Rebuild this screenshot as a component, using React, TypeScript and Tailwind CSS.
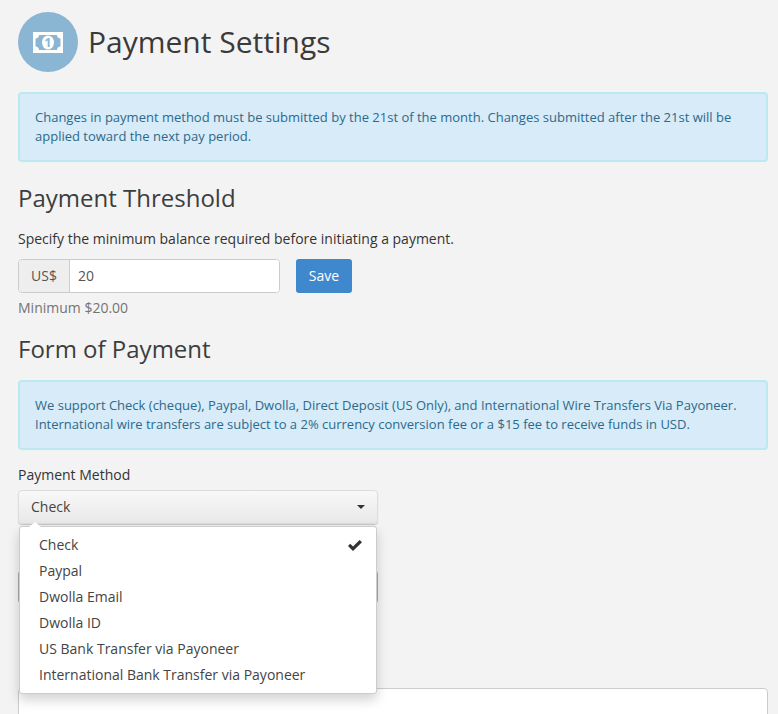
import { useState } from 'react';

const methods = [
  'Check',
  'Paypal',
  'Dwolla Email',
  'Dwolla ID',
  'US Bank Transfer via Payoneer',
  'International Bank Transfer via Payoneer',
];

function BillIcon() {
  return (
    <svg width="30" height="21" viewBox="0 0 30 21" className="block">
      <path
        fill="#fff"
        fillRule="evenodd"
        d="M0 0h30v21H0z M6 3 C6 5 4.5 6.5 2.5 6.5 v8 C4.5 14.5 6 16 6 18 h18 C24 16 25.5 14.5 27.5 14.5 v-8 C25.5 6.5 24 5 24 3z"
      />
      <ellipse cx="15" cy="10.5" rx="6" ry="7" fill="#fff" />
      <text x="15" y="15" textAnchor="middle" fontSize="12" fontWeight="700" fill="#8ab6d3" fontFamily="'Open Sans', sans-serif">1</text>
    </svg>
  );
}

function Alert({ children }: { children: React.ReactNode }) {
  return (
    <div className="rounded-[4px] border-2 border-[#bce8f1] bg-[#d8ebf8] px-[15px] py-[14px] text-[13px] leading-[19px] text-[#2b6a8c]">
      {children}
    </div>
  );
}

export default function App() {
  const [selected] = useState('Check');

  return (
    <div className="h-[714px] overflow-hidden bg-[#f3f3f3] pl-[18px] pr-[10px] pt-[12px] font-['Open_Sans',sans-serif] text-[14px] leading-[20px] text-[#333]">
      <div className="flex items-center gap-[10px]">
        <div className="flex h-[60px] w-[60px] items-center justify-center rounded-full bg-[#8ab6d3]">
          <BillIcon />
        </div>
        <h1 className="text-[30px] leading-[36px] font-normal text-[#3a3a3a]">Payment Settings</h1>
      </div>

      <div className="mt-[20px]">
        <Alert>
          Changes in payment method must be submitted by the 21st of the month. Changes submitted after the 21st will be applied toward the next pay period.
        </Alert>
      </div>

      <h2 className="mt-[20px] text-[24px] leading-[32px] font-normal text-[#3d3d3d]">Payment Threshold</h2>
      <p className="mt-[15px]">Specify the minimum balance required before initiating a payment.</p>

      <div className="mt-[10px] flex items-start">
        <div className="flex h-[34px] w-[262px] overflow-hidden rounded-[4px] border border-[#ccc]">
          <span className="flex w-[51px] items-center justify-center border-r border-[#ccc] bg-[#eee] text-[#555]">US$</span>
          <span className="flex flex-1 items-center bg-white pl-[8px] text-[#555]">20</span>
        </div>
        <button className="ml-[16px] h-[34px] w-[56px] rounded-[3px] bg-[#3f88cd] text-[14px] font-medium text-white">Save</button>
      </div>
      <p className="mt-[5px] text-[#737373]">Minimum $20.00</p>

      <h2 className="mt-[15px] text-[24px] leading-[32px] font-normal text-[#3d3d3d]">Form of Payment</h2>

      <div className="mt-[15px]">
        <Alert>
          We support Check (cheque), Paypal, Dwolla, Direct Deposit (US Only), and International Wire Transfers Via Payoneer. International wire transfers are subject to a 2% currency conversion fee or a $15 fee to receive funds in USD.
        </Alert>
      </div>

      <label className="mt-[15px] block">Payment Method</label>

      <div className="relative z-10 mt-[5px] w-[360px]">
        <button className="flex h-[34px] w-full items-center justify-between rounded-[4px] border border-[#ddd] bg-gradient-to-b from-[#f8f8f8] to-[#e8e8e8] pl-[12px] pr-[12px] text-[#444] shadow-[0_1px_1px_rgba(0,0,0,0.2)]">
          {selected}
          <span className="h-0 w-0 border-x-[4px] border-t-[4px] border-x-transparent border-t-[#333]" />
        </button>
        <div className="absolute left-[1px] top-[36px] w-[358px] rounded-[3px] border border-[#ccc] bg-white py-[5px] shadow-[0_6px_12px_rgba(0,0,0,0.175)]">
          <span className="absolute -top-[5px] left-[9px] h-0 w-0 border-x-[6px] border-b-[5px] border-x-transparent border-b-white" />
          {methods.map((m) => (
            <div key={m} className="flex h-[26px] items-center justify-between pl-[19px] pr-[14px] text-[#444]">
              {m}
              {m === selected && (
                <svg width="14" height="11" viewBox="0 0 14 11">
                  <path fill="#333" d="M0 6 L2.2 3.8 L5 6.6 L11.6 0 L14 2.3 L5 11z" />
                </svg>
              )}
            </div>
          ))}
        </div>
      </div>

      <div className="mt-[46px] h-[34px] w-[360px] rounded-[4px] border border-[#aaa] bg-white" />
      <div className="mt-[84px] h-[60px] w-full rounded-[4px] border border-[#ccc] bg-white" />
    </div>
  );
}
